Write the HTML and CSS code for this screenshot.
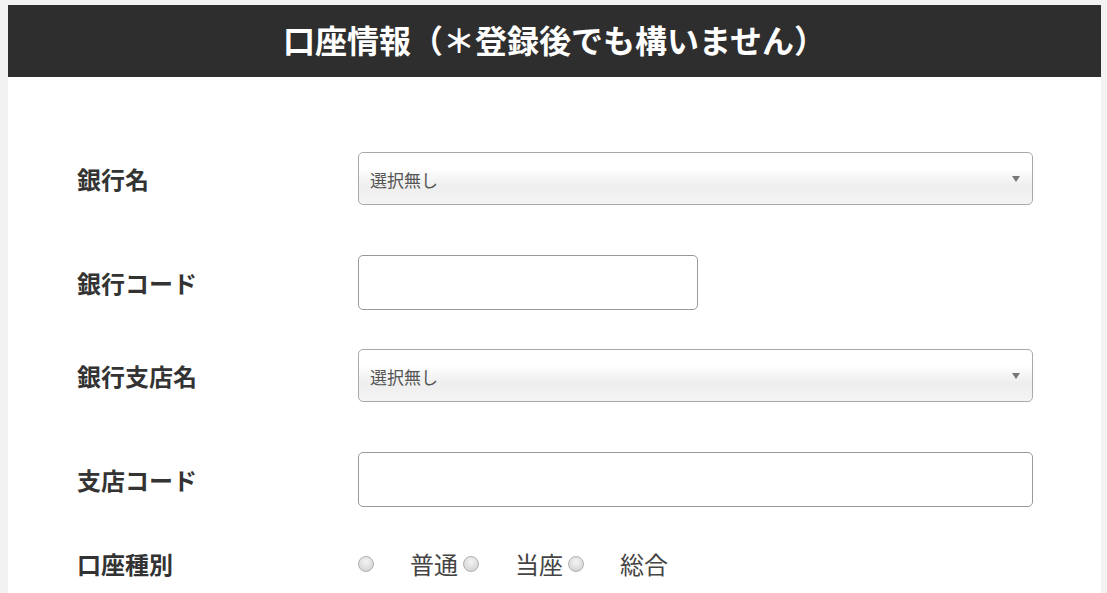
FILE: index.html
```html
<!DOCTYPE html>
<html lang="ja">
<head>
  <meta charset="UTF-8">
  <meta name="viewport" content="width=device-width, initial-scale=1.0">
  <title>口座情報</title>
  <link rel="stylesheet" href="styles.css">
</head>
<body>
  <div class="card">
    <h2 class="card-title">口座情報（＊登録後でも構いません）</h2>
    <form class="bank-form">
      <div class="row row-select">
        <label class="row-label" for="bankName">銀行名</label>
        <div class="select-wrap wide">
          <select id="bankName" name="bankName">
            <option value="">選択無し</option>
          </select>
          <span class="arrow"></span>
        </div>
      </div>
      <div class="row">
        <label class="row-label" for="bankCode">銀行コード</label>
        <input type="text" id="bankCode" name="bankCode" class="text-input short">
      </div>
      <div class="row row-select">
        <label class="row-label" for="branchName">銀行支店名</label>
        <div class="select-wrap wide">
          <select id="branchName" name="branchName">
            <option value="">選択無し</option>
          </select>
          <span class="arrow"></span>
        </div>
      </div>
      <div class="row">
        <label class="row-label" for="branchCode">支店コード</label>
        <input type="text" id="branchCode" name="branchCode" class="text-input wide">
      </div>
      <div class="row">
        <span class="row-label">口座種別</span>
        <div class="radios">
          <label class="radio"><input type="radio" name="accountType" value="1"><span>普通</span></label>
          <label class="radio"><input type="radio" name="accountType" value="2"><span>当座</span></label>
          <label class="radio"><input type="radio" name="accountType" value="3"><span>総合</span></label>
        </div>
      </div>
    </form>
  </div>
</body>
</html>
```

FILE: styles.css
```css
body {
  font-family: "Noto Sans CJK JP", "Noto Sans", sans-serif;
  background-color: #f2f2f2;
  margin: 0;
  padding: 5px 6px 0 8px;
}
.card {
  background-color: #fff;
  min-height: 600px;
}
.card-title {
  margin: 0;
  height: 72px;
  line-height: 68px;
  background-color: #2e2e2e;
  color: #fff;
  text-align: center;
  font-size: 32px;
  font-weight: bold;
}
.bank-form {
  padding: 75px 0 0 69px;
}
.row {
  display: flex;
  align-items: center;
  margin-bottom: 39px;
}
.row-select {
  margin-bottom: 50px;
}
.row-label {
  width: 281px;
  font-size: 24px;
  font-weight: bold;
  color: #333;
}
.select-wrap {
  position: relative;
}
.wide {
  width: 675px;
}
.short {
  width: 340px;
}
select {
  -webkit-appearance: none;
  appearance: none;
  width: 100%;
  height: 53px;
  padding: 2px 30px 0 11px;
  box-sizing: border-box;
  border: 1px solid #aaa;
  border-radius: 5px;
  background: linear-gradient(#fff 0%, #fff 30%, #eee 65%, #f4f4f4 100%);
  font-family: inherit;
  font-size: 17px;
  color: #555;
}
.arrow {
  position: absolute;
  right: 13px;
  top: 24px;
  border-left: 4px solid transparent;
  border-right: 4px solid transparent;
  border-top: 6px solid #777;
}
.text-input {
  height: 55px;
  box-sizing: border-box;
  border: 1px solid #999;
  border-radius: 5px;
  padding: 0 10px;
  font-size: 16px;
}
.radios {
  display: flex;
  align-items: center;
}
.radio {
  display: flex;
  align-items: center;
  font-size: 24px;
  color: #444;
}
.radio input {
  -webkit-appearance: none;
  appearance: none;
  width: 16px;
  height: 16px;
  margin: 0 36px 0 0;
  border: 1px solid #b0b0b0;
  border-radius: 50%;
  background: radial-gradient(circle at 50% 35%, #f4f4f4 0%, #d8d8d8 70%, #c8c8c8 100%);
}
.radio span {
  margin-right: 5px;
}
```
